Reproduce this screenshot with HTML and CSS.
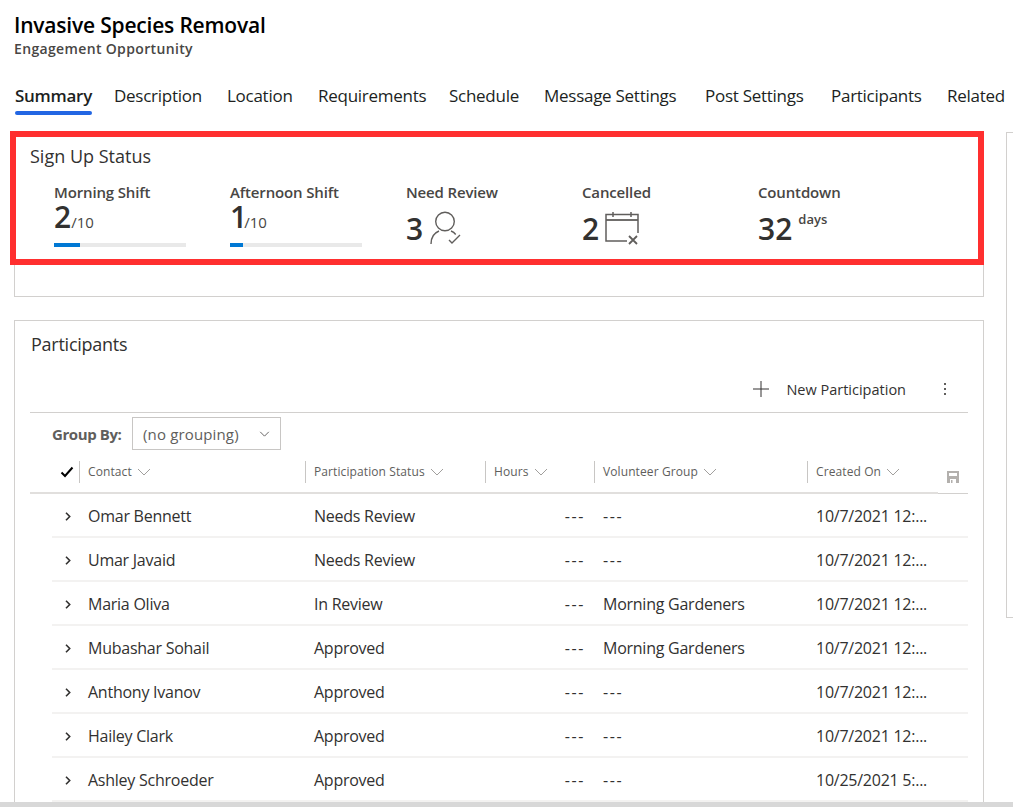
FILE: index.html
```html
<!DOCTYPE html>
<html lang="en">
<head>
  <meta charset="UTF-8" />
  <title>Invasive Species Removal</title>
  <link rel="stylesheet" href="styles.css">
</head>
<body>
  <svg class="defs" width="0" height="0">
    <symbol id="caret" viewBox="0 0 14 8"><path d="M1 1l6 6 6-6"/></symbol>
    <symbol id="chev" viewBox="0 0 6 9"><path d="M1 .8l3.700 3.700L1 8.200"/></symbol>
  </svg>

  <div class="page">
    <header class="head">
      <h1>Invasive Species Removal</h1>
      <p class="subtitle">Engagement Opportunity</p>
    </header>

    <nav class="tabs">
      <a class="tab active">Summary</a>
      <a class="tab">Description</a>
      <a class="tab">Location</a>
      <a class="tab">Requirements</a>
      <a class="tab">Schedule</a>
      <a class="tab">Message Settings</a>
      <a class="tab">Post Settings</a>
      <a class="tab">Participants</a>
      <a class="tab">Related</a>
    </nav>

    <div class="content">
      <main class="main">
        <section class="card status-card">
          <div class="highlight"></div>
          <h2>Sign Up Status</h2>
          <div class="stats">
            <div class="stat">
              <div class="stat-label">Morning Shift</div>
              <div class="stat-value tight"><b>2</b><span class="of">/10</span></div>
              <div class="bar"><div class="bar-fill" style="width: 20%"></div></div>
            </div>
            <div class="stat">
              <div class="stat-label">Afternoon Shift</div>
              <div class="stat-value tight"><b class="one">1</b><span class="of">/10</span></div>
              <div class="bar"><div class="bar-fill" style="width: 10%"></div></div>
            </div>
            <div class="stat">
              <div class="stat-label">Need Review</div>
              <div class="stat-value">
                <b>3</b>
                <svg class="stat-icon review-icon" width="32" height="34" viewBox="0 0 32 34" fill="none" stroke="#605e5c" stroke-width="1.400">
                  <circle cx="15" cy="10.500" r="9.300"/>
                  <path d="M1 33c0-7 3-11 8-13M21 20c2 .8 3.500 1.900 4.700 3.500"/>
                  <path d="M19 29l3 3 8-8"/>
                </svg>
              </div>
            </div>
            <div class="stat">
              <div class="stat-label">Cancelled</div>
              <div class="stat-value">
                <b>2</b>
                <svg class="stat-icon" width="34" height="34" viewBox="0 0 34 34" fill="none" stroke="#605e5c" stroke-width="1.500">
                  <path d="M33 22V3.500H1V30h21"/>
                  <path d="M1 9h32" stroke-width="1.800"/>
                  <path d="M8 1v5M26 1v5"/>
                  <path d="M24 25l8 8M32 25l-8 8" stroke-width="1.800"/>
                </svg>
              </div>
            </div>
            <div class="stat">
              <div class="stat-label">Countdown</div>
              <div class="stat-value"><b>32</b><span class="days">days</span></div>
            </div>
          </div>
        </section>

        <section class="card participants-card">
          <h2>Participants</h2>
          <div class="toolbar">
            <svg width="16" height="16" viewBox="0 0 16 16" stroke="#323130" stroke-width="1"><path d="M8 0v16M0 8h16"/></svg>
            <span class="toolbar-label">New Participation</span>
            <span class="more"><i></i><i></i><i></i></span>
          </div>

          <div class="group-by">
            <span class="group-label">Group By:</span>
            <div class="select">
              <span>(no grouping)</span>
              <svg width="11" height="6" viewBox="0 0 12 7" fill="none" stroke="#605e5c" stroke-width="1.100"><path d="M1 1l5 5 5-5"/></svg>
            </div>
          </div>

          <div class="grid-head">
            <div class="check-col">
              <svg width="14" height="12" viewBox="0 0 14 12" fill="none" stroke="#000" stroke-width="2"><path d="M1.500 6.500l3.500 3.500 7.500-8.500"/></svg>
            </div>
            <div class="col">Contact <svg class="caret"><use href="#caret"/></svg></div>
            <div class="col">Participation Status <svg class="caret"><use href="#caret"/></svg></div>
            <div class="col">Hours <svg class="caret"><use href="#caret"/></svg></div>
            <div class="col">Volunteer Group <svg class="caret"><use href="#caret"/></svg></div>
            <div class="col">Created On <svg class="caret"><use href="#caret"/></svg></div>
            <div class="save-col">
              <svg width="12" height="12" viewBox="0 0 12 12" fill="#b3b0ad"><path d="M0 0h12v12H9V8H3v4H0zM2 2v3h8V2zM4 9h1.500v3H4z"/></svg>
            </div>
          </div>

          <div class="rows">
            <div class="row"><svg class="chev"><use href="#chev"/></svg><span>Omar Bennett</span><span>Needs Review</span><span class="hours dash">---</span><span class="dash">---</span><span>10/7/2021 12:...</span></div>
            <div class="row"><svg class="chev"><use href="#chev"/></svg><span>Umar Javaid</span><span>Needs Review</span><span class="hours dash">---</span><span class="dash">---</span><span>10/7/2021 12:...</span></div>
            <div class="row"><svg class="chev"><use href="#chev"/></svg><span>Maria Oliva</span><span>In Review</span><span class="hours dash">---</span><span>Morning Gardeners</span><span>10/7/2021 12:...</span></div>
            <div class="row"><svg class="chev"><use href="#chev"/></svg><span>Mubashar Sohail</span><span>Approved</span><span class="hours dash">---</span><span>Morning Gardeners</span><span>10/7/2021 12:...</span></div>
            <div class="row"><svg class="chev"><use href="#chev"/></svg><span>Anthony Ivanov</span><span>Approved</span><span class="hours dash">---</span><span class="dash">---</span><span>10/7/2021 12:...</span></div>
            <div class="row"><svg class="chev"><use href="#chev"/></svg><span>Hailey Clark</span><span>Approved</span><span class="hours dash">---</span><span class="dash">---</span><span>10/7/2021 12:...</span></div>
            <div class="row"><svg class="chev"><use href="#chev"/></svg><span>Ashley Schroeder</span><span>Approved</span><span class="hours dash">---</span><span class="dash">---</span><span>10/25/2021 5:...</span></div>
          </div>
        </section>
      </main>
      <aside class="side"></aside>
    </div>
  </div>
  <div class="hscroll"></div>
</body>
</html>
```

FILE: styles.css
```css
html, body {
  height: 100%;
}
body {
  margin: 0;
  background: #fff;
  color: #323130;
  font-family: "Open Sans", "Noto Sans", sans-serif;
  display: flex;
  flex-direction: column;
  overflow: hidden;
}
.defs {
  position: absolute;
}
.page {
  flex: 1;
  min-height: 0;
  overflow: hidden;
  padding-left: 14px;
}

/* title */
.head {
  padding-top: 12px;
  height: 57px;
}
.head h1 {
  margin: 0;
  font-size: 21px;
  line-height: 27px;
  font-weight: 600;
  color: #000;
  letter-spacing: -0.2px;
}
.subtitle {
  margin: 0;
  font-size: 14px;
  line-height: 19px;
  font-weight: 600;
  color: #484644;
  letter-spacing: 0.35px;
}

/* tabs */
.tabs {
  display: grid;
  grid-template-columns: 99px 113px 91px 131px 95px 161px 126px 116px 1fr;
  height: 46px;
  padding-left: 1px;
  white-space: nowrap;
}
.tab {
  justify-self: start;
  font-size: 17px;
  line-height: 54px;
  height: 46px;
  color: #201f1e;
  letter-spacing: -0.27px;
  position: relative;
}
.tab.active {
  font-weight: 600;
}
.tab.active::after {
  content: "";
  position: absolute;
  left: 0;
  right: 0;
  bottom: 0;
  height: 4px;
  border-radius: 2px;
  background: #2266e3;
}

/* body */
.content {
  display: flex;
  gap: 22px;
  padding-top: 16px;
  align-items: flex-start;
}
.main {
  width: 970px;
  flex: none;
}
.side {
  flex: 1;
  height: 484px;
  border: 1px solid #d2d0ce;
  border-right: none;
  margin-top: 1px;
}
.card {
  border: 1px solid #d2d0ce;
  box-sizing: border-box;
  padding: 0 15px;
  position: relative;
}
.card h2 {
  margin: 0;
  font-size: 18px;
  line-height: 24px;
  font-weight: 400;
  color: #323130;
}
.status-card {
  height: 166px;
  padding-top: 12px;
}
.participants-card h2 {
  padding-left: 1px;
  letter-spacing: -0.25px;
}
.highlight {
  position: absolute;
  left: -5px;
  right: -1px;
  top: -1px;
  height: 134px;
  border: 6px solid #ff2f2f;
  box-sizing: border-box;
  pointer-events: none;
}

/* stats */
.stats {
  display: grid;
  grid-template-columns: repeat(5, 176px);
  padding: 15px 0 0 24px;
}
.stat-label {
  font-size: 15px;
  line-height: 19px;
  font-weight: 600;
  color: #484644;
  letter-spacing: -0.15px;
}
.stat-value {
  display: flex;
  align-items: flex-end;
  height: 36px;
  margin-top: 9px;
}
.stat-value.tight {
  height: 30px;
  margin-top: 0;
  align-items: baseline;
}
.stat-value b {
  font-size: 30px;
  line-height: 36px;
  font-weight: 600;
  color: #323130;
}
.stat-value.tight b {
  line-height: 30px;
}
.stat-value .one {
  letter-spacing: -3px;
}
.of {
  font-size: 15px;
  line-height: 18px;
  font-weight: 400;
  color: #484644;
}
.days {
  font-size: 13px;
  line-height: 18px;
  font-weight: 600;
  color: #484644;
  align-self: flex-start;
  margin: -1px 0 0 6px;
}
.stat-icon {
  margin: 0 0 2px 6px;
}
.review-icon {
  margin-left: 7px;
}
.bar {
  width: 132px;
  height: 4px;
  margin-top: 11px;
  background: #e9e9e9;
}
.bar-fill {
  height: 100%;
  background: #0078d4;
}

/* participants */
.participants-card {
  margin-top: 23px;
  height: 600px;
  padding-top: 11px;
}
.toolbar {
  display: flex;
  align-items: center;
  justify-content: flex-end;
  height: 44px;
  margin-top: 11px;
  padding-right: 22px;
  border-bottom: 1px solid #d2d0ce;
  padding-bottom: 1px;
  font-size: 14.5px;
  color: #323130;
}
.toolbar-label {
  margin-left: 17px;
}
.more {
  display: flex;
  flex-direction: column;
  gap: 3px;
  margin-left: 38px;
}
.more i {
  display: block;
  width: 2px;
  height: 2px;
  background: #605e5c;
}
.group-by {
  display: flex;
  align-items: center;
  height: 33px;
  margin-top: 4px;
  padding-left: 22px;
}
.group-label {
  font-size: 15px;
  font-weight: 700;
  color: #605e5c;
  width: 80px;
  letter-spacing: -0.4px;
}
.select {
  display: flex;
  align-items: center;
  justify-content: space-between;
  width: 149px;
  height: 33px;
  border: 1px solid #c8c6c4;
  box-sizing: border-box;
  padding: 0 10px;
  font-size: 15px;
  letter-spacing: 0.15px;
  color: #605e5c;
}

/* grid */
.grid-head {
  display: grid;
  grid-template-columns: 49px 226px 180px 109px 213px 131px 1fr;
  height: 38px;
  margin-top: 5px;
  border-bottom: 1px solid #d2d0ce;
  align-items: start;
  position: relative;
}
.grid-head::after {
  content: "";
  position: absolute;
  left: 0;
  width: 908px;
  bottom: -1px;
  height: 2px;
  background: #e1dfdd;
}
.check-col {
  display: flex;
  align-items: center;
  justify-content: flex-end;
  height: 22px;
  margin-top: 6px;
  padding-right: 5px;
}
.col {
  height: 22px;
  margin-top: 6px;
  line-height: 21px;
  border-left: 1px solid #c8c6c4;
  padding-left: 8px;
  font-size: 12px;
  letter-spacing: 0.1px;
  color: #605e5c;
  white-space: nowrap;
}
.caret {
  width: 14px;
  height: 8px;
  margin-left: 2px;
  fill: none;
  stroke: #a19f9d;
  stroke-width: 1;
}
.save-col {
  padding: 16px 0 0 9px;
}
.save-col svg {
  display: block;
}
.row {
  display: grid;
  grid-template-columns: 28px 226px 180px 109px 213px 1fr;
  height: 44px;
  margin-left: 22px;
  padding-top: 2px;
  box-sizing: border-box;
  align-items: center;
  font-size: 16px;
  color: #323130;
  letter-spacing: -0.25px;
  border-bottom: 2px solid #f3f2f1;
  white-space: nowrap;
}
.row > span {
  padding-left: 8px;
}
.chev {
  width: 6px;
  height: 9px;
  margin-left: 13px;
  fill: none;
  stroke: #323130;
  stroke-width: 1.600;
}
.row .dash {
  letter-spacing: 1.600px;
}
.row .hours {
  text-align: right;
  padding: 0 10px 0 0;
}
.hscroll {
  height: 5px;
  flex: none;
  background: #d8d8d8;
}
```
